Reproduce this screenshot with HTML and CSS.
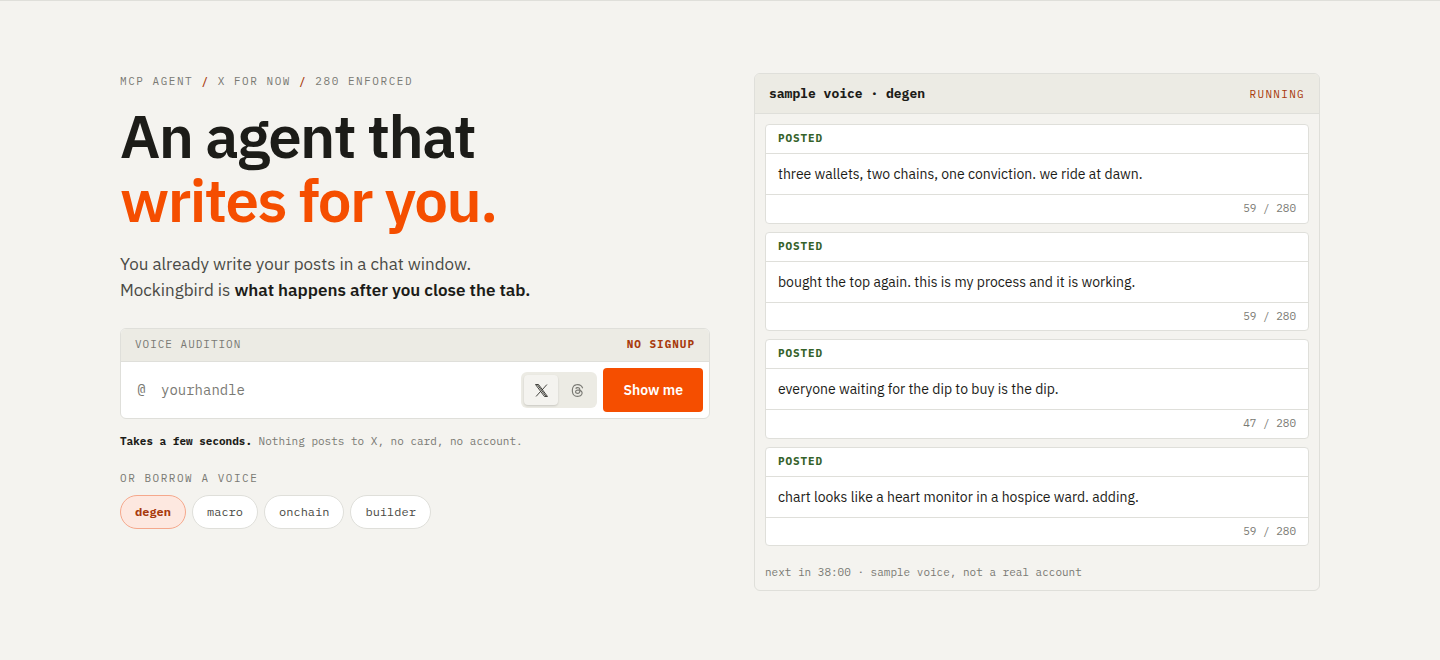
FILE: index.html
```html
<!DOCTYPE html>
<html lang="en">
<head>
<meta charset="utf-8">
<meta name="viewport" content="width=device-width, initial-scale=1">
<title>Mockingbird</title>
<link rel="stylesheet" href="styles.css">
</head>
<body>
<main class="hero">
  <section class="intro">
    <p class="eyebrow">MCP AGENT <span class="slash">/</span> X FOR NOW <span class="slash">/</span> 280 ENFORCED</p>
    <h1 class="title">An agent that<br><span class="title-accent">writes for you.</span></h1>
    <p class="lede">You already write your posts in a chat window.<br>Mockingbird is <strong>what happens after you close the tab.</strong></p>

    <form class="audition">
      <div class="audition-head">
        <label for="handle">VOICE AUDITION</label>
        <strong class="audition-flag">NO SIGNUP</strong>
      </div>
      <div class="audition-row">
        <span class="at">@</span>
        <input class="handle" id="handle" type="text" placeholder="yourhandle">
        <div class="networks">
          <button class="network network-on" type="button" aria-label="X" aria-pressed="true">
            <svg class="icon" viewBox="0 0 24 24" aria-hidden="true"><path d="M1 1h5.6L23 23h-5.6zM4.2 1L20.4 23M22 1l-9 10M10.6 13.4L2 23" fill="none" stroke="currentColor" stroke-width="1.5"/></svg>
          </button>
          <button class="network" type="button" aria-label="Threads" aria-pressed="false">
            <svg class="icon" viewBox="0 0 24 24" aria-hidden="true"><path fill="currentColor" d="M12.186 24h-.007c-3.581-.024-6.334-1.205-8.184-3.509C2.35 18.44 1.5 15.586 1.472 12.01v-.017c.03-3.579.879-6.43 2.525-8.482C5.845 1.205 8.6.024 12.18 0h.014c2.746.02 5.043.725 6.826 2.098 1.677 1.29 2.858 3.13 3.509 5.467l-2.04.569c-1.104-3.96-3.898-5.984-8.304-6.015-2.91.022-5.11.936-6.54 2.717C4.307 6.504 3.616 8.914 3.589 12c.027 3.086.718 5.496 2.057 7.164 1.43 1.783 3.631 2.698 6.54 2.717 2.623-.02 4.358-.631 5.8-2.045 1.647-1.613 1.618-3.593 1.09-4.798-.31-.71-.873-1.3-1.634-1.75-.192 1.352-.622 2.446-1.284 3.272-.886 1.102-2.14 1.704-3.73 1.79-1.202.065-2.361-.218-3.259-.801-1.063-.689-1.685-1.74-1.752-2.964-.065-1.19.408-2.285 1.33-3.082.88-.76 2.119-1.207 3.583-1.291a13.853 13.853 0 0 1 3.02.142c-.126-.742-.375-1.332-.75-1.757-.513-.586-1.308-.883-2.359-.89h-.029c-.844 0-1.992.232-2.721 1.32L7.734 7.847c.98-1.454 2.568-2.256 4.478-2.256h.044c3.194.02 5.097 1.975 5.287 5.388.108.046.216.094.321.142 1.49.7 2.58 1.761 3.154 3.07.797 1.82.871 4.79-1.548 7.158-1.85 1.81-4.094 2.628-7.277 2.65Zm1.003-11.69c-.242 0-.487.007-.739.021-1.836.103-2.98.946-2.916 2.143.067 1.256 1.452 1.839 2.784 1.767 1.224-.065 2.818-.543 3.086-3.71a10.5 10.5 0 0 0-2.215-.221z"/></svg>
          </button>
        </div>
        <button class="submit" type="submit">Show me</button>
      </div>
    </form>

    <p class="note"><strong>Takes a few seconds.</strong> Nothing posts to X, no card, no account.</p>
    <p class="borrow">OR BORROW A VOICE</p>
    <div class="voices">
      <button class="voice voice-on" type="button">degen</button>
      <button class="voice" type="button">macro</button>
      <button class="voice" type="button">onchain</button>
      <button class="voice" type="button">builder</button>
    </div>
  </section>

  <section class="sample">
    <header class="sample-head">
      <h2 class="sample-title">sample voice · degen</h2>
      <span class="running">RUNNING</span>
    </header>
    <div class="posts">
      <article class="post">
        <div class="post-status">POSTED</div>
        <p class="post-text">three wallets, two chains, one conviction. we ride at dawn.</p>
        <div class="post-count">59 / 280</div>
      </article>
      <article class="post">
        <div class="post-status">POSTED</div>
        <p class="post-text">bought the top again. this is my process and it is working.</p>
        <div class="post-count">59 / 280</div>
      </article>
      <article class="post">
        <div class="post-status">POSTED</div>
        <p class="post-text">everyone waiting for the dip to buy is the dip.</p>
        <div class="post-count">47 / 280</div>
      </article>
      <article class="post">
        <div class="post-status">POSTED</div>
        <p class="post-text">chart looks like a heart monitor in a hospice ward. adding.</p>
        <div class="post-count">59 / 280</div>
      </article>
    </div>
    <p class="sample-foot">next in 38:00 · sample voice, not a real account</p>
  </section>
</main>
</body>
</html>
```
FILE: styles.css
```css
:root {
  --bg: #f4f3ef;
  --band: #ecebe4;
  --line: #dfdfda;
  --ink: #1c1c18;
  --body: #4a4a45;
  --muted: #7a7a74;
  --accent: #f54e00;
  --rust: #a83a0c;
  --green: #35622a;
  --sans: "IBM Plex Sans", Roboto, "Noto Sans", sans-serif;
  --mono: "IBM Plex Mono", "Liberation Mono", monospace;
}

* { box-sizing: border-box; }

body {
  margin: 0;
  border-top: 1px solid var(--line);
  background: var(--bg);
  color: var(--ink);
  font-family: var(--sans);
}

h1, h2, p { margin: 0; }

button, input { font: inherit; color: inherit; }

button { cursor: pointer; }

.hero {
  display: grid;
  grid-template-columns: 295fr 283fr;
  gap: 44px;
  align-items: start;
  max-width: 1248px;
  margin: 0 auto;
  padding: 72px 24px 68px;
}

.eyebrow, .borrow {
  color: var(--muted);
  font: 11px/18px var(--mono);
  letter-spacing: 0.14em;
}

.eyebrow { line-height: 16px; }

.slash { color: var(--rust); font-weight: 500; }

.title {
  margin-top: 15px;
  font-size: 60px;
  font-weight: 600;
  line-height: 64px;
  letter-spacing: -0.025em;
}

.title-accent { color: var(--accent); }

.lede {
  margin-top: 19px;
  color: var(--body);
  font-size: 17px;
  line-height: 26px;
}

.lede strong { color: var(--ink); font-weight: 600; }

.audition {
  margin-top: 25px;
  overflow: hidden;
  border: 1px solid var(--line);
  border-radius: 6px;
  background: #fff;
}

.audition-head {
  display: flex;
  justify-content: space-between;
  padding: 6px 14px 8px;
  border-bottom: 1px solid var(--line);
  background: var(--band);
  color: var(--muted);
  font: 11px/18px var(--mono);
  letter-spacing: 0.09em;
}

.audition-flag { color: var(--rust); }

.audition-row {
  display: flex;
  align-items: center;
  gap: 6px;
  padding: 6px;
}

.at {
  padding: 0 9px 0 10px;
  color: var(--muted);
  font: 15px/20px var(--mono);
}

.handle {
  flex: 1;
  min-width: 0;
  height: 44px;
  padding: 0;
  border: 0;
  outline: 0;
  background: transparent;
  font: 14px/20px var(--mono);
}

.handle::placeholder { color: var(--muted); opacity: 1; }

.networks {
  display: flex;
  gap: 2px;
  padding: 3px;
  border-radius: 6px;
  background: var(--band);
}

.network {
  display: grid;
  place-items: center;
  width: 34px;
  height: 30px;
  padding: 0;
  border: 0;
  border-radius: 4px;
  background: transparent;
  color: var(--muted);
}

.network-on {
  background: var(--bg);
  color: var(--ink);
  box-shadow: 0 1px 2px rgba(0, 0, 0, 0.15);
}

.icon { width: 13px; height: 13px; }

.submit {
  height: 44px;
  padding: 0 20px;
  border: 0;
  border-radius: 4px;
  background: var(--accent);
  color: #fff;
  font-size: 14px;
  font-weight: 600;
}

.note {
  margin-top: 13px;
  color: var(--muted);
  font: 11px/18px var(--mono);
}

.note strong { color: var(--ink); }

.borrow { margin-top: 19px; }

.voices {
  display: flex;
  flex-wrap: wrap;
  gap: 6px;
  margin-top: 8px;
}

.voice {
  height: 34px;
  padding: 0 14px;
  border: 1px solid var(--line);
  border-radius: 17px;
  background: #fff;
  color: var(--body);
  font: 12px/18px var(--mono);
}

.voice-on {
  border-color: #f5a88c;
  background: #fde8e0;
  color: var(--rust);
  font-weight: 700;
}

.sample {
  overflow: hidden;
  border: 1px solid var(--line);
  border-radius: 6px;
}

.sample-head {
  display: flex;
  align-items: center;
  justify-content: space-between;
  padding: 10px 14px 9px;
  border-bottom: 1px solid var(--line);
  background: var(--band);
}

.sample-title { font: 700 13px/20px var(--mono); }

.running {
  color: var(--rust);
  font: 11px/20px var(--mono);
  letter-spacing: 0.12em;
}

.posts {
  display: grid;
  gap: 8px;
  padding: 10px;
}

.post {
  border: 1px solid var(--line);
  border-radius: 4px;
  background: #fff;
}

.post-status {
  padding: 4px 12px 6px;
  color: var(--green);
  font: 700 11px/18px var(--mono);
  letter-spacing: 0.08em;
}

.post-text {
  padding: 9px 12px;
  border-top: 1px solid var(--line);
  border-bottom: 1px solid var(--line);
  font-size: 14px;
  line-height: 22px;
}

.post-count {
  padding: 5px 12px 6px;
  color: var(--muted);
  font: 11px/1.5 var(--mono);
  text-align: right;
}

.sample-foot {
  padding: 7px 10px 9px;
  color: var(--muted);
  font: 11px/18px var(--mono);
}

@media (max-width: 900px) {
  .hero { grid-template-columns: 1fr; }
}
```
